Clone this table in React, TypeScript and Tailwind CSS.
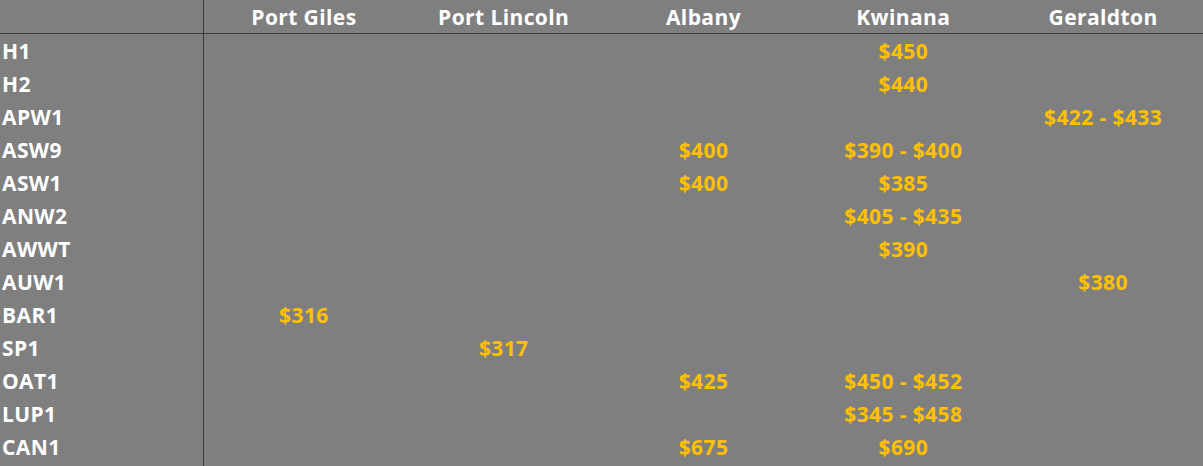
const ports = ['Port Giles', 'Port Lincoln', 'Albany', 'Kwinana', 'Geraldton'];

// grade -> price per port (same order as ports)
const rows: [string, string[]][] = [
  ['H1', ['', '', '', '$450', '']],
  ['H2', ['', '', '', '$440', '']],
  ['APW1', ['', '', '', '', '$422 - $433']],
  ['ASW9', ['', '', '$400', '$390 - $400', '']],
  ['ASW1', ['', '', '$400', '$385', '']],
  ['ANW2', ['', '', '', '$405 - $435', '']],
  ['AWWT', ['', '', '', '$390', '']],
  ['AUW1', ['', '', '', '', '$380']],
  ['BAR1', ['$316', '', '', '', '']],
  ['SP1', ['', '$317', '', '', '']],
  ['OAT1', ['', '', '$425', '$450 - $452', '']],
  ['LUP1', ['', '', '', '$345 - $458', '']],
  ['CAN1', ['', '', '$675', '$690', '']],
];

export default function App() {
  return (
    <div
      className="w-[1203px] h-[466px] overflow-hidden bg-[#7f7f7f] text-[21px] font-bold leading-none tracking-[0.4px]"
      style={{ fontFamily: '"Open Sans", Lato, sans-serif' }}
    >
      <div className="grid grid-cols-[204px_repeat(5,1fr)]">
        <div className="h-[34px] border-r border-b border-[#3a3a3a]" />
        {ports.map((p) => (
          <div
            key={p}
            className="h-[34px] pt-[1px] flex items-center justify-center text-white border-b border-[#3a3a3a]"
          >
            {p}
          </div>
        ))}
        {rows.map(([grade, prices]) => (
          <div key={grade} className="contents">
            <div className="h-[33px] pt-[1px] flex items-center pl-[2px] text-white border-r border-[#3a3a3a]">
              {grade}
            </div>
            {prices.map((v, i) => (
              <div key={i} className="h-[33px] pt-[1px] flex items-center justify-center text-[#ffc000]">
                {v}
              </div>
            ))}
          </div>
        ))}
        <div className="h-[10px] border-r border-[#3a3a3a]" />
      </div>
    </div>
  );
}
